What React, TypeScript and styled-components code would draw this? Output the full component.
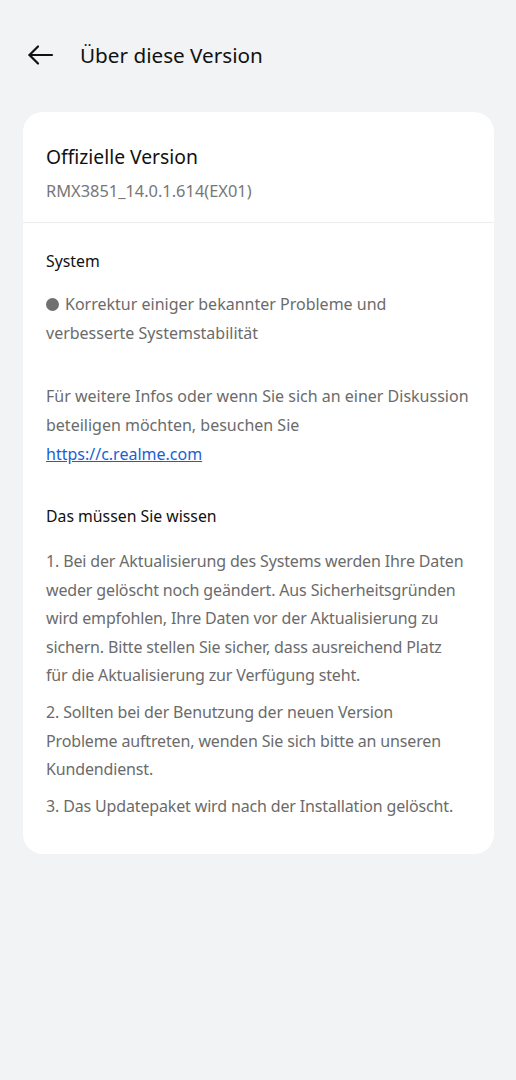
import React from 'react';
import styled, { createGlobalStyle } from 'styled-components';

const GlobalStyle = createGlobalStyle`
  html, body {
    margin: 0;
    padding: 0;
    background: #f2f3f5;
    font-family: "Noto Sans", "Open Sans", sans-serif;
  }
`;

const Page = styled.div`
  width: 516px;
  min-height: 1080px;
  background: #f2f3f5;
  box-sizing: border-box;
  padding: 0 22px 0 23px;
`;

const Header = styled.header`
  display: flex;
  align-items: center;
  height: 112px;
  padding-left: 3px;
  box-sizing: border-box;
  padding-bottom: 2px;
`;

const BackButton = styled.button`
  display: flex;
  align-items: center;
  justify-content: center;
  width: 28px;
  height: 28px;
  padding: 0;
  border: none;
  background: none;
  color: #111;
  margin-right: 26px;
`;

const Title = styled.h1`
  margin: 0;
  font-size: 20.7px;
  font-weight: 400;
  color: #111;
`;

const Card = styled.section`
  background: #fff;
  border-radius: 20px;
  overflow: hidden;
  padding-bottom: 34px;
`;

const CardTop = styled.div`
  padding: 32px 23px 20px;
  border-bottom: 1px solid #ececee;
`;

const VersionName = styled.div`
  font-size: 19.3px;
  color: #111;
  line-height: 26px;
`;

const VersionCode = styled.div`
  margin-top: 10px;
  font-size: 16.4px;
  color: #777;
  line-height: 22px;
`;

const CardBody = styled.div`
  padding: 26px 21px 0 23px;
`;

const SectionTitle = styled.h2<{ $top?: number }>`
  margin: ${p => p.$top ?? 0}px 0 0;
  font-size: 15.8px;
  font-weight: 400;
  color: #111;
  line-height: 24px;
`;

const Paragraph = styled.p<{ $top: number }>`
  margin: ${p => p.$top}px 0 0;
  font-size: 16px;
  line-height: 29px;
  color: #6b6b6b;
`;

const Dot = styled.span`
  display: inline-block;
  width: 13px;
  height: 13px;
  border-radius: 50%;
  background: #707070;
  margin-right: 6px;
  vertical-align: -1px;
`;

const Link = styled.a`
  display: block;
  width: fit-content;
  color: #1a5fd0;
  text-decoration: underline;
`;

const ListItem = styled.p<{ $top: number }>`
  margin: ${p => p.$top}px 0 0;
  font-size: 16px;
  line-height: 28.6px;
  letter-spacing: -0.15px;
  color: #6b6b6b;
  white-space: nowrap;
`;

const notes: string[][] = [
  [
    '1. Bei der Aktualisierung des Systems werden Ihre Daten',
    'weder gelöscht noch geändert. Aus Sicherheitsgründen',
    'wird empfohlen, Ihre Daten vor der Aktualisierung zu',
    'sichern. Bitte stellen Sie sicher, dass ausreichend Platz',
    'für die Aktualisierung zur Verfügung steht.',
  ],
  [
    '2. Sollten bei der Benutzung der neuen Version',
    'Probleme auftreten, wenden Sie sich bitte an unseren',
    'Kundendienst.',
  ],
  ['3. Das Updatepaket wird nach der Installation gelöscht.'],
];

export default function App() {
  return (
    <>
      <GlobalStyle />
      <Page>
        <Header>
          <BackButton aria-label="Zurück">
            <svg width="27" height="22" viewBox="0 0 27 22" fill="none" stroke="currentColor" strokeWidth="2.2" strokeLinecap="round" strokeLinejoin="round">
              <path d="M25 11H2.5" />
              <path d="M11 2.5L2.5 11L11 19.5" />
            </svg>
          </BackButton>
          <Title>Über diese Version</Title>
        </Header>
        <Card>
          <CardTop>
            <VersionName>Offizielle Version</VersionName>
            <VersionCode>RMX3851_14.0.1.614(EX01)</VersionCode>
          </CardTop>
          <CardBody>
            <SectionTitle>System</SectionTitle>
            <Paragraph $top={17}>
              <Dot />Korrektur einiger bekannter Probleme und verbesserte Systemstabilität
            </Paragraph>
            <Paragraph $top={34}>
              Für weitere Infos oder wenn Sie sich an einer Diskussion beteiligen möchten, besuchen Sie
              <Link href="#">https://c.realme.com</Link>
            </Paragraph>
            <SectionTitle $top={35}>Das müssen Sie wissen</SectionTitle>
            {notes.map((lines, i) => (
              <ListItem key={i} $top={i === 0 ? 19 : 8}>
                {lines.map((line, j) => (
                  <React.Fragment key={j}>
                    {j > 0 && <br />}
                    {line}
                  </React.Fragment>
                ))}
              </ListItem>
            ))}
          </CardBody>
        </Card>
      </Page>
    </>
  );
}
